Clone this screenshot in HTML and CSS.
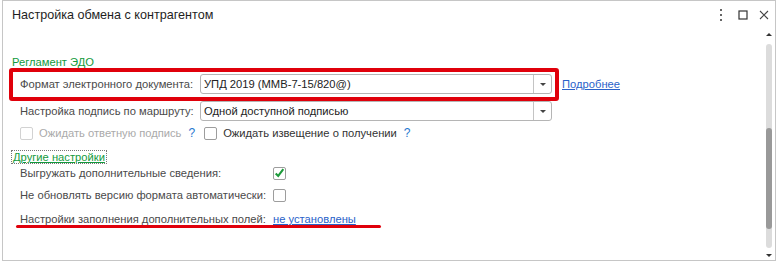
FILE: index.html
```html
<!DOCTYPE html>
<html lang="ru">
<head>
<meta charset="utf-8">
<link rel="stylesheet" href="styles.css">
</head>
<body>
<div class="window">
  <div class="titlebar">
    <div class="title">Настройка обмена с контрагентом</div>
    <div class="controls">
      <svg class="ic" width="6" height="12" viewBox="0 0 6 12"><rect x="2" y="0" width="2" height="2" fill="#666"/><rect x="2" y="5" width="2" height="2" fill="#666"/><rect x="2" y="10" width="2" height="2" fill="#666"/></svg>
      <svg class="ic" width="10" height="10" viewBox="0 0 10 10"><rect x="1" y="1" width="8" height="8" fill="none" stroke="#333" stroke-width="1.2"/></svg>
      <svg class="ic" width="10" height="10" viewBox="0 0 10 10"><path d="M1 1L9 9M9 1L1 9" stroke="#444" stroke-width="1.1" fill="none"/></svg>
    </div>
  </div>
  <div class="main">
    <div class="content">
      <div class="section">Регламент ЭДО</div>
      <div class="row r1">
        <div class="label">Формат электронного документа:</div>
        <div class="input"><span class="val">УПД 2019 (ММВ-7-15/820@)</span><span class="drop"><i></i></span></div>
        <a class="link more">Подробнее</a>
      </div>
      <div class="row r2">
        <div class="label">Настройка подпись по маршруту:</div>
        <div class="input"><span class="val">Одной доступной подписью</span><span class="drop"><i></i></span></div>
      </div>
      <div class="row r3">
        <span class="cb disabled"></span>
        <span class="cbtext dis">Ожидать ответную подпись</span>
        <span class="q">?</span>
        <span class="cb second"></span>
        <span class="cbtext">Ожидать извещение о получении</span>
        <span class="q">?</span>
      </div>
      <div class="group"><span>Другие настройки</span></div>
      <div class="row r4">
        <div class="label wide">Выгружать дополнительные сведения:</div>
        <span class="cb checked"><svg width="13" height="12" viewBox="0 0 13 12"><path d="M2 6.5L5 9.5L11 1.5" stroke="#1c9a3a" stroke-width="2.4" fill="none"/></svg></span>
      </div>
      <div class="row r5">
        <div class="label wide">Не обновлять версию формата автоматически:</div>
        <span class="cb"></span>
      </div>
      <div class="row r6">
        <div class="label wide">Настройки заполнения дополнительных полей:</div>
        <a class="link">не установлены</a>
      </div>
      <div class="redbox"></div>
      <div class="redline"></div>
    </div>
    <div class="scrollbar">
      <div class="arrow up"></div>
      <div class="track"><div class="thumb"></div></div>
      <div class="arrow down"></div>
    </div>
  </div>
</div>
</body>
</html>
```
FILE: styles.css
```css
* { box-sizing: border-box; }
body {
  margin: 0;
  background: #fff;
  font-family: "Liberation Sans", Arial, sans-serif;
  font-size: 11.2px;
  color: #4a4a4a;
}
.window {
  margin-left: 2px;
  width: 774px;
  height: 261px;
  border: 1px solid #c6c6c6;
  display: flex;
  flex-direction: column;
}
.titlebar {
  height: 30px;
  display: flex;
  align-items: center;
  padding-left: 9px;
  padding-bottom: 2px;
}
.title {
  font-size: 12.6px;
  color: #1e1e1e;
  flex: 1;
}
.controls {
  display: flex;
  align-items: center;
  margin-right: 6px;
}
.controls .ic:nth-child(1) { margin-right: 14px; }
.controls .ic:nth-child(2) { margin-right: 11px; }
.main {
  flex: 1;
  display: flex;
}
.content {
  flex: 1;
  position: relative;
  padding-left: 9px;
  padding-top: 23px;
}
.section {
  color: #129a3c;
  line-height: 16px;
  height: 16px;
}
.row {
  display: flex;
  align-items: center;
  padding-left: 8px;
}
.r1 { margin-top: 4px; height: 20px; }
.r2 { margin-top: 7px; height: 20px; }
.r3 { margin-top: 5px; height: 14px; }
.r4 { margin-top: 2px; height: 14px; }
.r5 { margin-top: 8px; height: 14px; }
.r6 { margin-top: 10px; height: 14px; }
.label {
  width: 180px;
  flex: none;
  white-space: nowrap;
}
.label.wide { width: 253px; }
.input {
  width: 352px;
  height: 20px;
  border: 1px solid #b5b5b5;
  border-radius: 3px;
  display: flex;
  align-items: center;
  color: #222;
}
.val { flex: 1; padding-left: 3px; white-space: nowrap; }
.drop {
  width: 18px;
  height: 100%;
  border-left: 1px solid #c4c4c4;
  display: flex;
  align-items: center;
  justify-content: center;
}
.drop i {
  display: block;
  width: 0; height: 0;
  border-left: 3px solid transparent;
  border-right: 3px solid transparent;
  border-top: 3px solid #444;
}
.link {
  color: #2a62c9;
  text-decoration: underline;
  white-space: nowrap;
}
.more { margin-left: 10px; }
.cb {
  width: 13px;
  height: 13px;
  border: 1px solid #9d9d9d;
  border-radius: 2px;
  flex: none;
  display: flex;
  align-items: center;
  justify-content: center;
  background: #fff;
}
.cb.disabled { border-color: #d2d2d2; }
.cb.second { margin-left: 9px; }
.cbtext { margin-left: 6px; color: #333; white-space: nowrap; }
.cbtext.dis { color: #aaa; }
.q { color: #1f78cf; margin-left: 7px; font-size: 12px; }
.group {
  margin-top: 10px;
  margin-left: -1px;
  height: 14px;
  display: flex;
}
.group span {
  border: 1px dotted #777;
  color: #129a3c;
  text-decoration: underline;
  line-height: 12px;
  padding: 0 1px;
}
.redbox {
  position: absolute;
  left: 6px;
  top: 37px;
  width: 550px;
  height: 33px;
  border: 4px solid #e0000b;
  border-radius: 3px;
}
.redline {
  position: absolute;
  left: 13px;
  top: 194px;
  width: 365px;
  height: 3px;
  background: #e0000b;
  border-radius: 2px;
}
.scrollbar {
  width: 8px;
  margin-right: 2px;
  display: flex;
  flex-direction: column;
  align-items: center;
  padding-top: 2px;
  padding-bottom: 3px;
}
.arrow {
  width: 0; height: 0;
  border-left: 3px solid transparent;
  border-right: 3px solid transparent;
}
.arrow.up { border-bottom: 3px solid #333; }
.arrow.down { border-top: 3px solid #333; }
.track {
  flex: 1;
  width: 6px;
  margin: 8px 0 6px;
  background: #dcdcdc;
  border-radius: 3px;
  display: flex;
  flex-direction: column;
  padding-top: 84px;
}
.thumb {
  width: 6px;
  height: 101px;
  background: #999;
  border-radius: 3px;
}
```
